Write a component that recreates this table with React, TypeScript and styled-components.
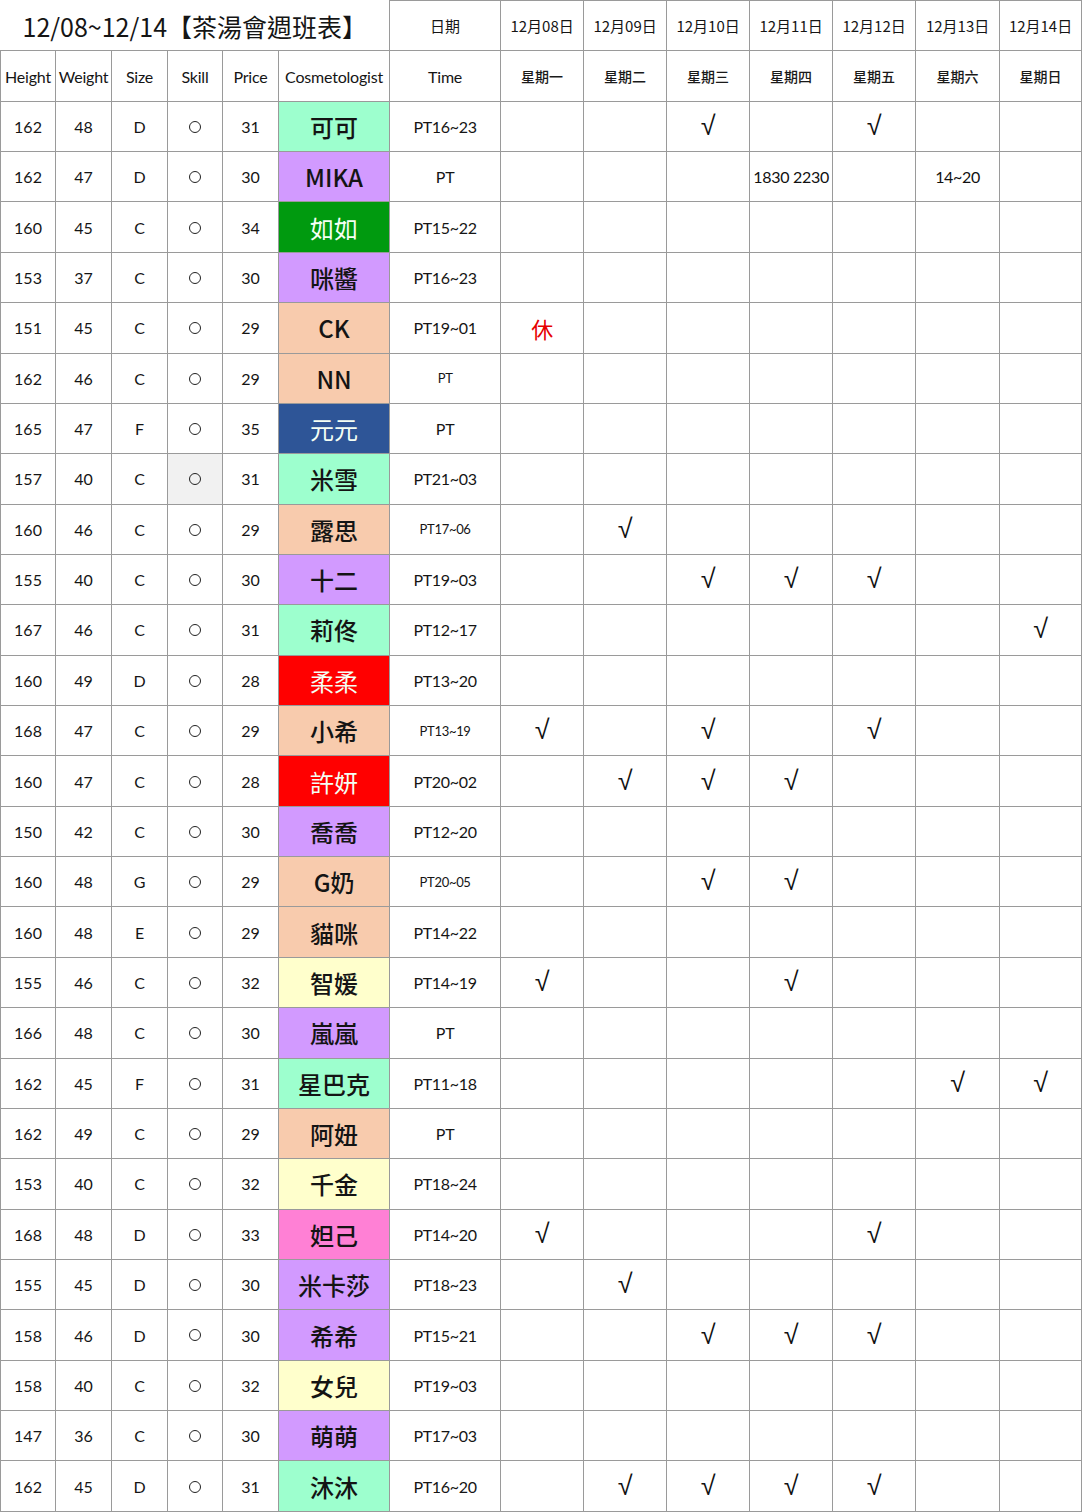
import styled, { createGlobalStyle } from 'styled-components';

const GlobalStyle = createGlobalStyle`
    html, body {
        margin: 0;
        padding: 0;
        background: #ffffff;
    }
    body {
        font-family: Lato, "Noto Sans CJK TC", sans-serif;
        color: #111111;
    }
`;

const COLORS: Record<string, string> = {
    mint: '#9dffce',
    purple: '#d29aff',
    green: '#009a0f',
    peach: '#f8cbad',
    blue: '#2e5597',
    red: '#ff0000',
    yellow: '#ffffcc',
    pink: '#ff80d5',
};

const LIGHT_TEXT = ['green', 'blue', 'red'];

const WIDTHS = [55, 56, 56, 55, 56, 111, 111, 83, 83, 83, 83, 83, 84];

const DAYS = ['12月08日', '12月09日', '12月10日', '12月11日', '12月12日', '12月13日', '12月14日'];
const WEEKDAYS = ['星期一', '星期二', '星期三', '星期四', '星期五', '星期六', '星期日'];

type Row = {
    h: number;
    w: number;
    size: string;
    price: number;
    name: string;
    color: string;
    time: string;
    small?: boolean;
    shade?: boolean;
    days: Record<number, string>;
};

const V = '√';

const rows: Row[] = [
    { h: 162, w: 48, size: 'D', price: 31, name: '可可', color: 'mint', time: 'PT16~23', days: { 2: V, 4: V } },
    { h: 162, w: 47, size: 'D', price: 30, name: 'MIKA', color: 'purple', time: 'PT', days: { 3: '1830 2230', 5: '14~20' } },
    { h: 160, w: 45, size: 'C', price: 34, name: '如如', color: 'green', time: 'PT15~22', days: {} },
    { h: 153, w: 37, size: 'C', price: 30, name: '咪醬', color: 'purple', time: 'PT16~23', days: {} },
    { h: 151, w: 45, size: 'C', price: 29, name: 'CK', color: 'peach', time: 'PT19~01', days: { 0: '休' } },
    { h: 162, w: 46, size: 'C', price: 29, name: 'NN', color: 'peach', time: 'PT', small: true, days: {} },
    { h: 165, w: 47, size: 'F', price: 35, name: '元元', color: 'blue', time: 'PT', days: {} },
    { h: 157, w: 40, size: 'C', price: 31, name: '米雪', color: 'mint', time: 'PT21~03', shade: true, days: {} },
    { h: 160, w: 46, size: 'C', price: 29, name: '露思', color: 'peach', time: 'PT17~06', small: true, days: { 1: V } },
    { h: 155, w: 40, size: 'C', price: 30, name: '十二', color: 'purple', time: 'PT19~03', days: { 2: V, 3: V, 4: V } },
    { h: 167, w: 46, size: 'C', price: 31, name: '莉佟', color: 'mint', time: 'PT12~17', days: { 6: V } },
    { h: 160, w: 49, size: 'D', price: 28, name: '柔柔', color: 'red', time: 'PT13~20', days: {} },
    { h: 168, w: 47, size: 'C', price: 29, name: '小希', color: 'peach', time: 'PT13~19', small: true, days: { 0: V, 2: V, 4: V } },
    { h: 160, w: 47, size: 'C', price: 28, name: '許妍', color: 'red', time: 'PT20~02', days: { 1: V, 2: V, 3: V } },
    { h: 150, w: 42, size: 'C', price: 30, name: '喬喬', color: 'purple', time: 'PT12~20', days: {} },
    { h: 160, w: 48, size: 'G', price: 29, name: 'G奶', color: 'peach', time: 'PT20~05', small: true, days: { 2: V, 3: V } },
    { h: 160, w: 48, size: 'E', price: 29, name: '貓咪', color: 'peach', time: 'PT14~22', days: {} },
    { h: 155, w: 46, size: 'C', price: 32, name: '智媛', color: 'yellow', time: 'PT14~19', days: { 0: V, 3: V } },
    { h: 166, w: 48, size: 'C', price: 30, name: '嵐嵐', color: 'purple', time: 'PT', days: {} },
    { h: 162, w: 45, size: 'F', price: 31, name: '星巴克', color: 'mint', time: 'PT11~18', days: { 5: V, 6: V } },
    { h: 162, w: 49, size: 'C', price: 29, name: '阿妞', color: 'peach', time: 'PT', days: {} },
    { h: 153, w: 40, size: 'C', price: 32, name: '千金', color: 'yellow', time: 'PT18~24', days: {} },
    { h: 168, w: 48, size: 'D', price: 33, name: '妲己', color: 'pink', time: 'PT14~20', days: { 0: V, 4: V } },
    { h: 155, w: 45, size: 'D', price: 30, name: '米卡莎', color: 'purple', time: 'PT18~23', days: { 1: V } },
    { h: 158, w: 46, size: 'D', price: 30, name: '希希', color: 'purple', time: 'PT15~21', days: { 2: V, 3: V, 4: V } },
    { h: 158, w: 40, size: 'C', price: 32, name: '女兒', color: 'yellow', time: 'PT19~03', days: {} },
    { h: 147, w: 36, size: 'C', price: 30, name: '萌萌', color: 'purple', time: 'PT17~03', days: {} },
    { h: 162, w: 45, size: 'D', price: 31, name: '沐沐', color: 'mint', time: 'PT16~20', days: { 1: V, 2: V, 3: V, 4: V } },
];

const Sheet = styled.table`
    width: 1082px;
    height: 1512px;
    border-collapse: collapse;
    table-layout: fixed;
    background: #ffffff;
`;

const Tr = styled.tr`
    height: 50px;
`;

const Cell = styled.td<{ $shade?: boolean }>`
    border: 1px solid #9a9a9a;
    padding: 0;
    text-align: center;
    vertical-align: middle;
    font-size: 16px;
    color: #151515;
    white-space: nowrap;
    background: ${p => (p.$shade ? '#f1f1f1' : 'transparent')};
`;

const TitleCell = styled(Cell)`
    font-size: 25px;
    font-family: "Noto Sans CJK TC", sans-serif;
    border-top: none;
    border-left: none;
    padding-top: 2px;
`;

const HeadCell = styled(Cell)`
    font-size: 15px;
    font-family: "Noto Sans CJK TC", sans-serif;
`;

const LabelCell = styled(Cell)`
    font-size: 16px;
    letter-spacing: -0.2px;
`;

const WeekCell = styled(Cell)`
    font-size: 14px;
    font-weight: 500;
    font-family: "Noto Sans CJK TC", sans-serif;
    color: #1a1a1a;
`;

const NameCell = styled(Cell)<{ $bg: string; $light: boolean }>`
    background: ${p => p.$bg};
    color: ${p => (p.$light ? '#f4fff4' : '#141414')};
    font-size: 24px;
    font-family: "Noto Sans CJK TC", sans-serif;
    font-weight: ${p => (p.$light ? 400 : 500)};
`;

const TimeCell = styled(Cell)<{ $small?: boolean }>`
    font-size: ${p => (p.$small ? '13px' : '16px')};
    letter-spacing: -0.3px;
`;

const DayCell = styled(Cell)<{ $kind: 'mark' | 'off' | 'text' }>`
    font-size: ${p => (p.$kind === 'mark' ? '27px' : p.$kind === 'off' ? '22px' : '16px')};
    color: ${p => (p.$kind === 'off' ? '#e60000' : '#111111')};
    font-family: ${p =>
        p.$kind === 'mark'
            ? '"Liberation Sans", sans-serif'
            : p.$kind === 'off'
              ? '"Noto Sans CJK TC", sans-serif'
              : 'Lato, "Noto Sans CJK TC", sans-serif'};
    letter-spacing: -0.3px;
`;

const Circle = styled.span`
    display: inline-block;
    width: 10px;
    height: 10px;
    border: 1.5px solid #222222;
    border-radius: 50%;
    vertical-align: middle;
    position: relative;
    top: -2px;
`;

function dayKind(v: string): 'mark' | 'off' | 'text' {
    if (v === V) return 'mark';
    if (v === '休') return 'off';
    return 'text';
}

export default function App() {
    return (
        <>
            <GlobalStyle />
            <Sheet>
                <colgroup>
                    {WIDTHS.map((w, i) => (
                        <col key={i} style={{ width: w }} />
                    ))}
                </colgroup>
                <tbody>
                    <Tr>
                        <TitleCell colSpan={6}>12/08~12/14【茶湯會週班表】</TitleCell>
                        <HeadCell>日期</HeadCell>
                        {DAYS.map(d => (
                            <HeadCell key={d}>{d}</HeadCell>
                        ))}
                    </Tr>
                    <Tr>
                        <LabelCell>Height</LabelCell>
                        <LabelCell>Weight</LabelCell>
                        <LabelCell>Size</LabelCell>
                        <LabelCell>Skill</LabelCell>
                        <LabelCell>Price</LabelCell>
                        <LabelCell>Cosmetologist</LabelCell>
                        <LabelCell>Time</LabelCell>
                        {WEEKDAYS.map(d => (
                            <WeekCell key={d}>{d}</WeekCell>
                        ))}
                    </Tr>
                    {rows.map((r, i) => (
                        <Tr key={i}>
                            <Cell>{r.h}</Cell>
                            <Cell>{r.w}</Cell>
                            <Cell>{r.size}</Cell>
                            <Cell $shade={r.shade}>
                                <Circle />
                            </Cell>
                            <Cell>{r.price}</Cell>
                            <NameCell $bg={COLORS[r.color]} $light={LIGHT_TEXT.includes(r.color)}>
                                {r.name}
                            </NameCell>
                            <TimeCell $small={r.small}>{r.time}</TimeCell>
                            {DAYS.map((_, d) => {
                                const v = r.days[d];
                                return (
                                    <DayCell key={d} $kind={v ? dayKind(v) : 'text'}>
                                        {v ?? ''}
                                    </DayCell>
                                );
                            })}
                        </Tr>
                    ))}
                </tbody>
            </Sheet>
        </>
    );
}
